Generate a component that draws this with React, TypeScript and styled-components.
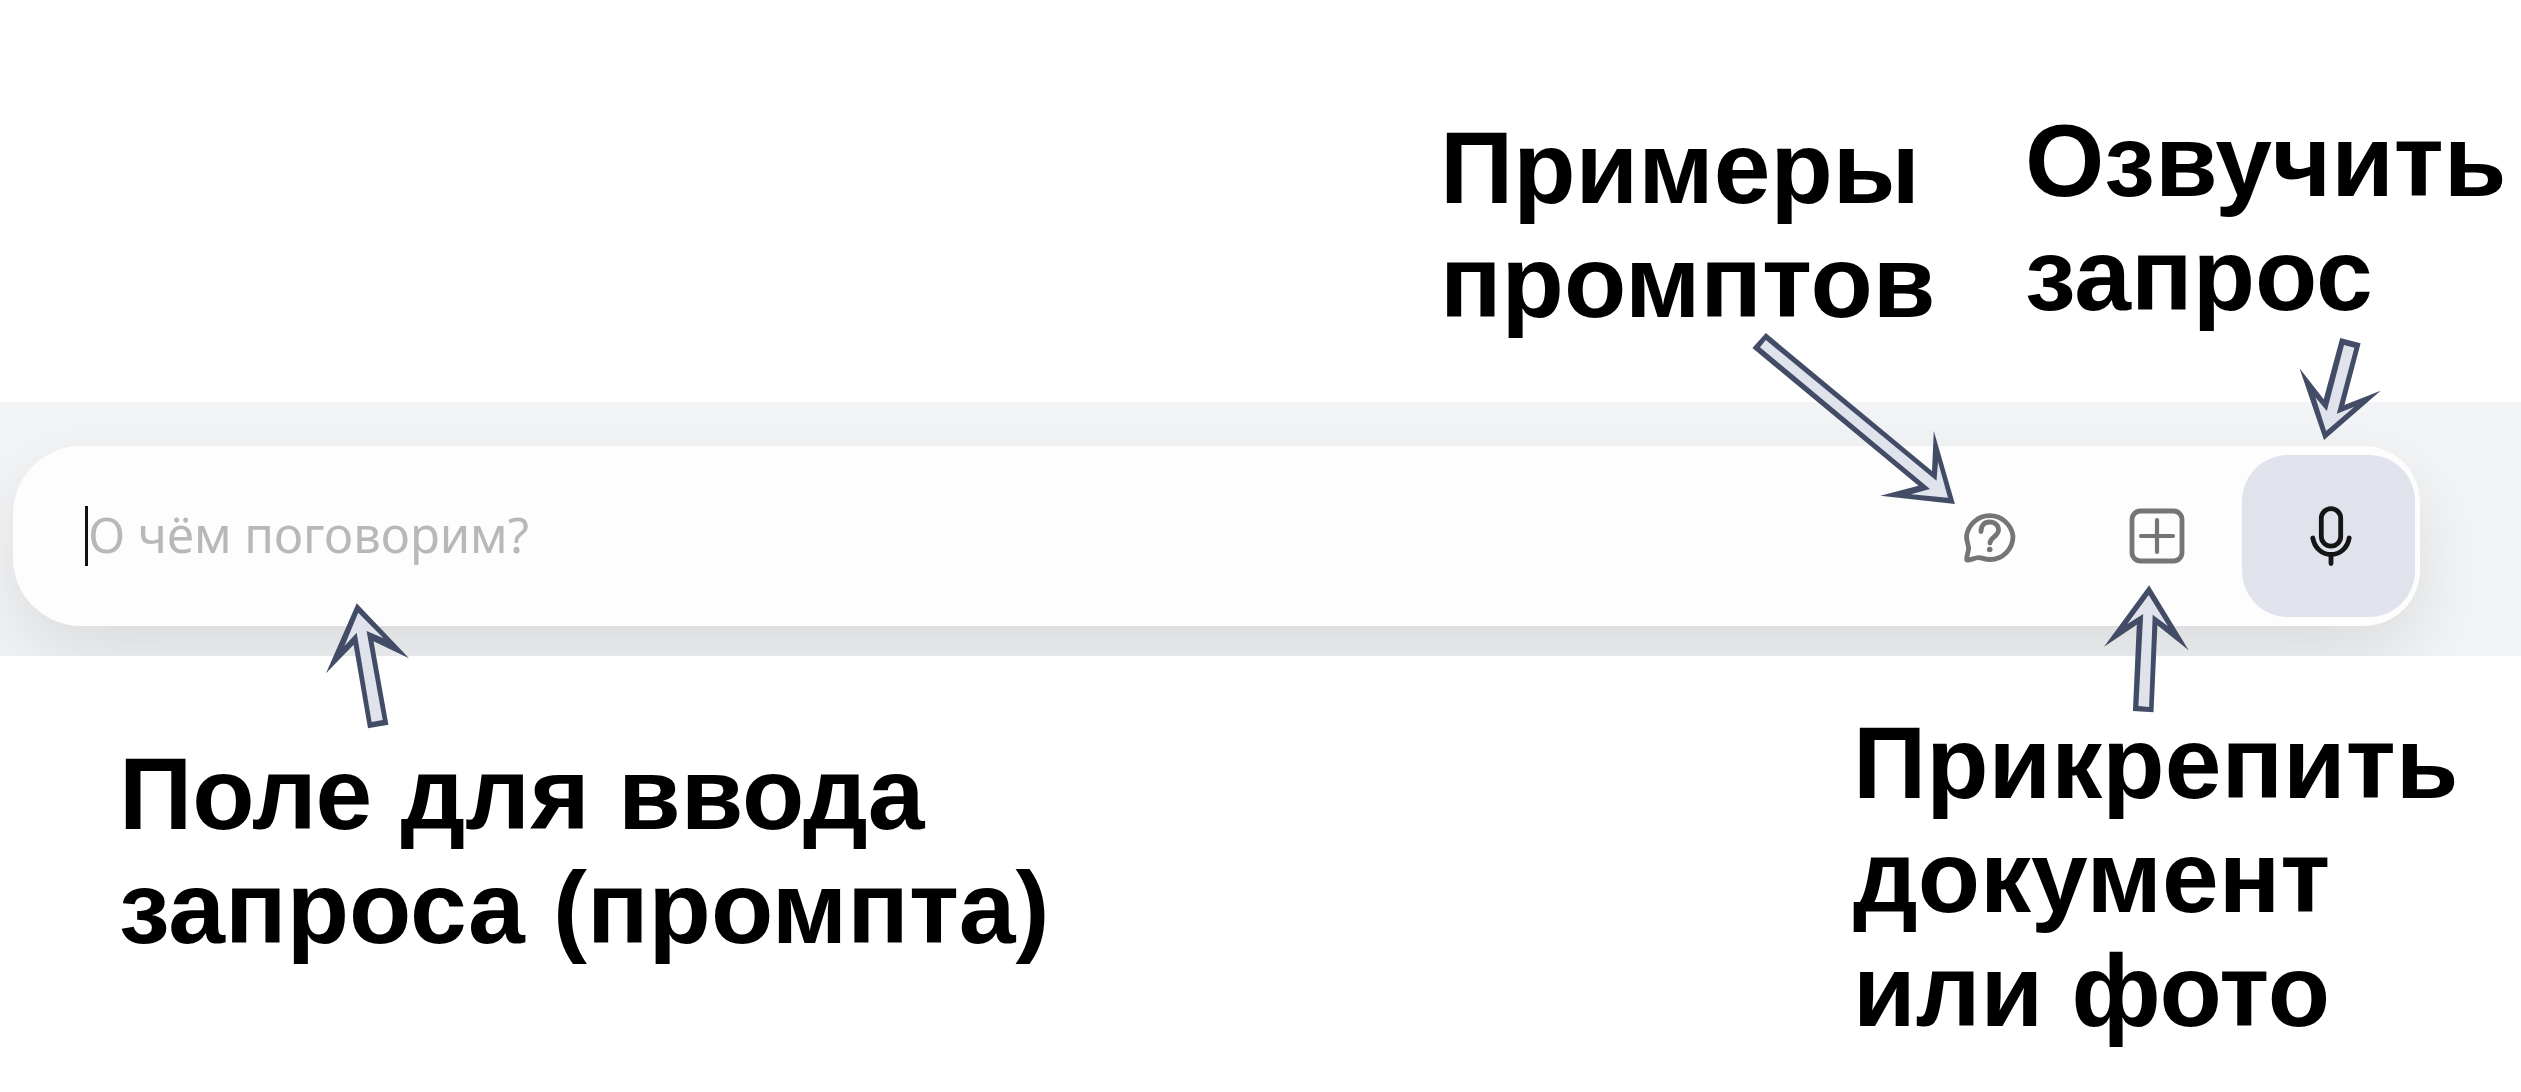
import React from "react";
import styled, { createGlobalStyle } from "styled-components";

const GlobalStyle = createGlobalStyle`
  *, *::before, *::after { box-sizing: border-box; }
  body { margin: 0; background: #fff; }
`;

const Page = styled.main`
  position: relative;
  overflow: hidden;
  font-family: "Liberation Sans", Arial, sans-serif;
`;

const CaptionRow = styled.section<{ $align: string; $pad: string }>`
  display: flex;
  justify-content: ${(p) => p.$align};
  align-items: flex-start;
  padding: ${(p) => p.$pad};
`;

const Caption = styled.p<{ $drop?: number; $width?: number }>`
  margin: ${(p) => p.$drop ?? 0}px 0 0;
  width: ${(p) => (p.$width ? `${p.$width}px` : "auto")};
  color: #000;
  font-size: 102px;
  font-weight: 700;
  line-height: 114px;
  white-space: nowrap;
`;

const Band = styled.section`
  padding: 44px 101px 30px 13px;
  overflow: hidden;
  background: #f3f4f6;
`;

const Composer = styled.form`
  display: flex;
  align-items: center;
  height: 180px;
  padding: 0 5px 0 72px;
  border-radius: 68px 56px 56px 68px;
  background: #fdfdfd;
  box-shadow: 0 32px 80px rgba(0, 4, 4, 0.1);
`;

const Caret = styled.span`
  width: 3px;
  height: 60px;
  background: #111;
`;

const PromptInput = styled.input`
  flex: 1;
  min-width: 0;
  height: 72px;
  padding: 0 0 4px;
  border: 0;
  outline: 0;
  background: transparent;
  color: #222;
  font-family: "Noto Sans", sans-serif;
  font-size: 49px;
  &::placeholder { color: #b8b8b8; opacity: 1; }
`;

const IconButton = styled.button`
  display: grid;
  place-items: center;
  width: 84px;
  height: 84px;
  margin-right: 83px;
  padding: 0;
  border: 0;
  background: transparent;
  color: #757575;
  svg { display: block; }
`;

const AttachButton = styled(IconButton)`
  margin-right: 43px;
`;

const VoiceButton = styled(IconButton)`
  width: 173px;
  height: 162px;
  margin-right: 0;
  padding-left: 4px;
  border-radius: 46px;
  background: #e0e3eb;
  color: #151515;
`;

const Pointer = styled.svg<{ $top: number; $left?: number; $right?: number }>`
  position: absolute;
  top: ${(p) => p.$top}px;
  left: ${(p) => (p.$left === undefined ? "auto" : `${p.$left}px`)};
  right: ${(p) => (p.$right === undefined ? "auto" : `${p.$right}px`)};
  pointer-events: none;
`;

interface ArrowProps {
  box: [number, number, number, number];
  outer: string;
  inner: string;
  left?: number;
  right?: number;
}

function Arrow({ box, outer, inner, left, right }: ArrowProps) {
  return (
    <Pointer
      $top={box[1]}
      $left={left}
      $right={right}
      width={box[2]}
      height={box[3]}
      viewBox={box.join(" ")}
      aria-hidden="true"
    >
      <polygon points={outer} fill="#434c66" />
      <polygon points={inner} fill="#e0e3eb" />
    </Pointer>
  );
}

export default function App() {
  return (
    <>
      <GlobalStyle />
      <Page>
        <CaptionRow $align="flex-end" $pad="104px 10px 63px 0">
          <Caption $drop={7} $width={585}>
            Примеры
            <br />
            промптов
          </Caption>
          <Caption $width={486}>
            Озвучить
            <br />
            запрос
          </Caption>
        </CaptionRow>

        <Band>
          <Composer onSubmit={(e) => e.preventDefault()}>
            <Caret />
            <PromptInput type="text" aria-label="Запрос" placeholder="О чём поговорим?" />
            <IconButton type="button" aria-label="Примеры промптов">
              <svg width="52" height="54" viewBox="0 0 52 54" fill="none" stroke="currentColor" strokeWidth="4.8" strokeLinecap="round" strokeLinejoin="round">
                <path d="M2.8 51 C1.6 50 4.5 43.5 4.6 39.5 C4.7 36 2.5 33 2.5 27 A23.5 23.8 0 0 1 49 27 C49 40 39 50.5 26 50.5 C20 50.5 18.5 48.6 14.5 48.6 C10.5 48.6 4.2 52.2 2.8 51 Z" />
                <path d="M17 22.5 C17 16 20.5 13 25.5 13 C31 13 34.5 16.5 34.5 21 C34.5 27.5 26 28 26 34" />
                <circle cx="25.7" cy="40.5" r="2.8" fill="currentColor" stroke="none" />
              </svg>
            </IconButton>
            <AttachButton type="button" aria-label="Прикрепить документ или фото">
              <svg width="56" height="56" viewBox="0 0 56 56" fill="none" stroke="currentColor" strokeWidth="4.8" strokeLinecap="round">
                <rect x="3" y="3" width="50" height="50" rx="8.5" />
                <path d="M28 12V44M12 28H44" strokeWidth="4.2" />
              </svg>
            </AttachButton>
            <VoiceButton type="button" aria-label="Озвучить запрос">
              <svg width="42" height="60" viewBox="0 0 42 60" fill="none" stroke="currentColor" strokeWidth="4.8" strokeLinecap="round">
                <rect x="11.3" y="2.6" width="19.4" height="37.6" rx="9.7" />
                <path d="M2.8 32 C4.5 42 12 48.5 21 48.5 C30 48.5 37.5 42 39.2 32 M21 48.5 V57.5" />
              </svg>
            </VoiceButton>
          </Composer>
        </Band>

        <CaptionRow $align="space-between" $pad="50px 10px 44px 119px">
          <Caption $drop={31}>
            Поле для ввода
            <br />
            запроса (промпта)
          </Caption>
          <Caption $width={658}>
            Прикрепить
            <br />
            документ
            <br />
            или фото
          </Caption>
        </CaptionRow>

        <Arrow
          box={[1750, 330, 210, 180]}
          right={561}
          outer="1765.8,333 1932,471 1933.8,431 1954.9,504 1880.3,495.7 1918.5,485.7 1752.4,348"
          inner="1765.8,340 1936.5,480.7 1938,461.7 1948,497.7 1910.9,494.3 1930,489 1760,347.3"
        />
        <Arrow
          box={[2295, 330, 90, 115]}
          right={136}
          outer="2340.2,338 2360.6,343.3 2344.4,405 2380.6,390.7 2324,440 2299.5,368.3 2323.7,399.3"
          inner="2344,345 2354.4,347.7 2336.8,413.7 2354.4,406.7 2326.1,431 2315.4,397.3 2326.8,411"
        />
        <Arrow
          box={[320, 600, 95, 135]}
          left={320}
          outer="356.7,603.3 409,658.3 373.5,641.3 388.4,724.7 368,728.3 353.6,644.7 326,673.3"
          inner="358.2,612.7 383.5,638.3 366.6,631 382.7,720 371.6,722 356.7,632.7 344.4,646"
        />
        <Arrow
          box={[2100, 580, 95, 140]}
          right={326}
          outer="2149.1,585.3 2188.7,650.3 2157.4,625.3 2153.5,712.3 2132.9,711 2136.8,624.7 2104,646.7"
          inner="2148.7,595 2168,626.3 2152.7,614.7 2149.1,707 2138.4,706 2143.2,614 2127.3,624"
        />
      </Page>
    </>
  );
}
